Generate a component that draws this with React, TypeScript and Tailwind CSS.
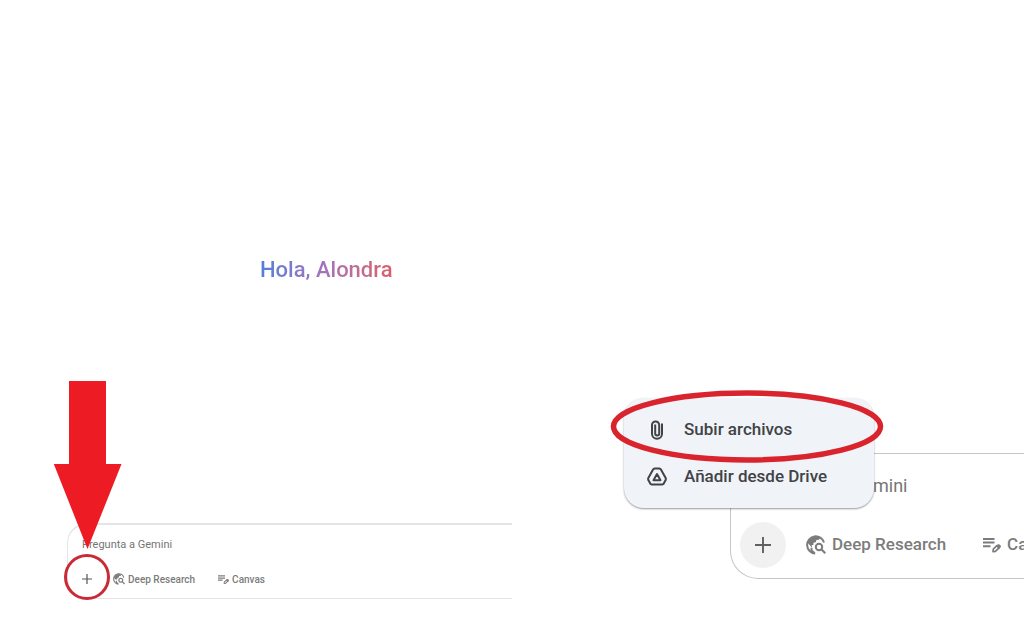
function PlusIcon({ className }: { className: string }) {
  return (
    <svg viewBox="0 0 16 16" className={className} fill="none" stroke="currentColor" strokeWidth="1.9" aria-hidden="true">
      <path d="M8 0v16M0 8h16" />
    </svg>
  )
}

function ResearchIcon({ className }: { className: string }) {
  return (
    <svg viewBox="0 0 20 20" className={className} fill="none" stroke="currentColor" strokeWidth="2" aria-hidden="true">
      <path d="M9.200 18.500A8.600 8.600 0 1 1 18 7.600" />
      <path d="M1.600 7.800C3 3.500 6.500 1.400 10.500 1.500l4 1.200-1.500 2-2.600.4-.6 2.200-2.400.5v2.300H5.800v2.600L4.500 11z" fill="currentColor" stroke="none" />
      <path d="M5.500 12.800v2.600l3 2.600" />
      <circle cx="13" cy="12" r="3.200" />
      <path d="M15.300 14.300l4 4" />
    </svg>
  )
}

function CanvasIcon({ className }: { className: string }) {
  return (
    <svg viewBox="0 0 18 18" className={className} fill="none" stroke="currentColor" aria-hidden="true">
      <path d="M0 3h11.500M0 6.600h11.500M0 10.200h7.500" strokeWidth="2" />
      <path d="M10 15.600l.3-2.400 3.600-3.500a1.500 1.500 0 0 1 2.100 2.100l-3.600 3.500z" strokeWidth="1.700" strokeLinejoin="round" />
      <path d="M13 10.200l3 3 1.200-1.400a1.900 1.900 0 0 0-2.800-2.800z" fill="currentColor" stroke="none" />
    </svg>
  )
}

function ClipIcon() {
  return (
    <svg viewBox="0 0 20 20" className="size-5 shrink-0" fill="none" stroke="currentColor" strokeWidth="2" aria-hidden="true">
      <path d="M15 3.500v10.300a5 5 0 0 1-10 0V5a3.600 3.600 0 0 1 7.200 0v8.400a2 2 0 0 1-4 0V4.500" />
    </svg>
  )
}

function DriveIcon() {
  return (
    <svg viewBox="0 0 20 20" className="size-5 shrink-0" fill="none" stroke="currentColor" strokeWidth="2" strokeLinejoin="round" aria-hidden="true">
      <path d="M7.400 1.500h5.200l1.200.8 5 9v1.500l-2.200 4-1.200.7H4.600l-1.200-.7-2.200-4v-1.500l5-9z" />
      <path d="M10 7l3.500 6.200h-7z" />
    </svg>
  )
}

export default function App() {
  return (
    <main className="grid grid-cols-2 bg-white font-['Roboto','Liberation_Sans',sans-serif]">
      <section className="overflow-hidden pt-[254px] pb-8 pl-[67px]">
        <h1 className="ml-[193px] w-fit bg-linear-to-r from-[#4f7fdc] via-[#a672b8] to-[#d95f66] bg-clip-text text-[22px] leading-8 font-medium text-transparent">
          Hola, Alondra
        </h1>
        <div className="relative mt-[237px]">
          <form className="rounded-l-[20px] border border-t-2 border-r-0 border-[#e5e5e5] pt-3 pb-[5px] pl-[5px]">
            <input
              type="text"
              aria-label="Pregunta a Gemini"
              placeholder="Pregunta a Gemini"
              className="block h-4 w-full pl-[9px] text-[11px] leading-4 outline-none placeholder:text-[#757575]"
            />
            <div className="mt-3 flex items-center text-[10px] font-medium text-[#7c7c7c]">
              <button type="button" aria-label="Añadir" className="flex size-7 shrink-0 items-center justify-center text-[#555]">
                <PlusIcon className="size-[10px]" />
              </button>
              <button type="button" className="ml-3 flex items-center gap-[3px] whitespace-nowrap">
                <ResearchIcon className="size-3" />
                Deep Research
              </button>
              <button type="button" className="ml-[23px] flex items-center gap-[3px] whitespace-nowrap">
                <CanvasIcon className="size-[11px]" />
                Canvas
              </button>
            </div>
          </form>
          <svg viewBox="0 0 70 220" className="pointer-events-none absolute top-[-142px] left-[-14px] h-[220px] w-[70px]" aria-hidden="true">
            <path d="M16 0h37v83h15.500L34.500 168 .8 83H16z" fill="#ed1c24" />
            <circle cx="34" cy="196" r="21.500" fill="none" stroke="#c92a35" strokeWidth="3" />
          </svg>
        </div>
      </section>

      <section className="overflow-hidden pt-[453px] pb-8 pl-[218px]">
        <div className="relative">
          <form className="rounded-l-[28px] border border-r-0 border-[#c6c6c6] pt-5 pb-[10px] pl-[9px]">
            <input
              type="text"
              aria-label="Pregunta a Gemini"
              placeholder="Pregunta a Gemini"
              className="block h-6 w-full pl-5 text-[18px] leading-6 outline-none placeholder:text-[#757575]"
            />
            <div className="mt-6 flex items-center text-[17px] font-medium text-[#7c7c7c]">
              <button type="button" aria-label="Añadir" className="flex size-[46px] shrink-0 items-center justify-center rounded-full bg-[#f1f1f1] text-[#606060]">
                <PlusIcon className="size-4" />
              </button>
              <button type="button" className="ml-5 flex shrink-0 items-center gap-[6px] whitespace-nowrap">
                <ResearchIcon className="size-5" />
                Deep Research
              </button>
              <button type="button" className="ml-[37px] flex shrink-0 items-center gap-[6px] whitespace-nowrap">
                <CanvasIcon className="size-[18px]" />
                Canvas
              </button>
            </div>
          </form>
          <div
            role="menu"
            className="absolute top-[-55px] left-[-106px] w-[250px] rounded-[20px] bg-[#f0f3f8] py-2 text-[17px] font-medium text-[#414346] shadow-[0_1px_2px_rgba(0,0,0,0.4)]"
          >
            <button type="button" role="menuitem" className="flex h-[47px] w-full items-center gap-[17px] pl-[23px]">
              <ClipIcon />
              Subir archivos
            </button>
            <button type="button" role="menuitem" className="flex h-[47px] w-full items-center gap-[17px] pl-[23px]">
              <DriveIcon />
              Añadir desde Drive
            </button>
          </div>
          <svg viewBox="0 0 274 74" className="pointer-events-none absolute top-[-64px] left-[-120px] h-[74px] w-[274px]" aria-hidden="true">
            <ellipse cx="137" cy="37.500" rx="133.500" ry="33.500" fill="none" stroke="#d9242e" strokeWidth="5.500" />
          </svg>
        </div>
      </section>
    </main>
  )
}
